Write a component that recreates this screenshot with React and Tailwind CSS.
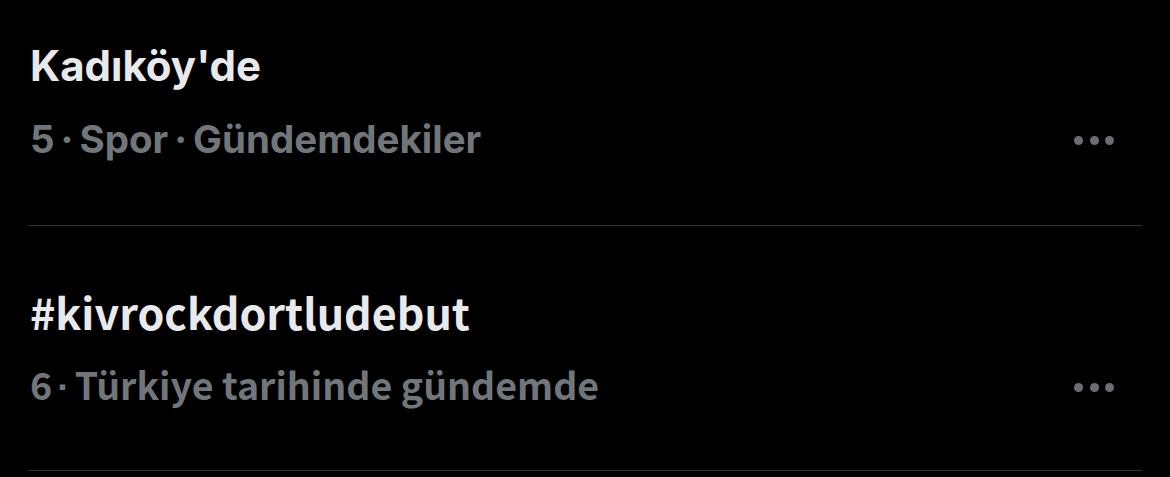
import React from 'react';

const trends = [
  {
    id: 1,
    title: "Kadıköy'de",
    meta: ['5', 'Spor', 'Gündemdekiler'],
    font: "font-['Inter','Liberation_Sans',sans-serif]",
    titleSize: 'text-[42px]',
    metaSize: 'text-[38.5px]',
    sep: 'mx-[6px]',
    first: true,
  },
  {
    id: 2,
    title: '#kivrockdortludebut',
    meta: ['6', 'Türkiye tarihinde gündemde'],
    font: "font-['Noto_Sans_CJK_JP','Noto_Sans',sans-serif]",
    titleSize: 'text-[43px]',
    metaSize: 'text-[37.5px]',
    sep: "mx-[5px] font-['Liberation_Sans',sans-serif]",
  },
];

const MoreDots = () => (
  <div className="flex items-center gap-[6.5px]">
    <span className="w-[9px] h-[9px] rounded-full bg-[#6b6e72]" />
    <span className="w-[9px] h-[9px] rounded-full bg-[#6b6e72]" />
    <span className="w-[9px] h-[9px] rounded-full bg-[#6b6e72]" />
  </div>
);

const TrendItem = ({ trend }) => (
  <div className={`border-b border-[#2f3336] pb-[63px] ${trend.first ? 'pt-[40px]' : 'pt-[59px]'} ${trend.font}`}>
    <div className={`${trend.titleSize} h-[52px] leading-[52px] font-bold text-[#e7e9ea] pl-[2px]`}>{trend.title}</div>
    <div className="mt-[24px] h-[46px] flex items-center justify-between pr-[28px]">
      <div className={`${trend.metaSize} h-[46px] leading-[46px] font-bold text-[#71767b] pl-[2px]`}>
        {trend.meta.map((m, i) => (
          <span key={i}>
            {i > 0 && <span className={trend.sep}>·</span>}
            {m}
          </span>
        ))}
      </div>
      <div className={trend.first ? 'translate-y-[1px]' : 'translate-y-[3px]'}>
        <MoreDots />
      </div>
    </div>
  </div>
);

export default function App() {
  return (
    <div className="w-[1170px] h-[477px] bg-black overflow-hidden px-[28px]">
      {trends.map(t => (
        <TrendItem key={t.id} trend={t} />
      ))}
    </div>
  );
}
